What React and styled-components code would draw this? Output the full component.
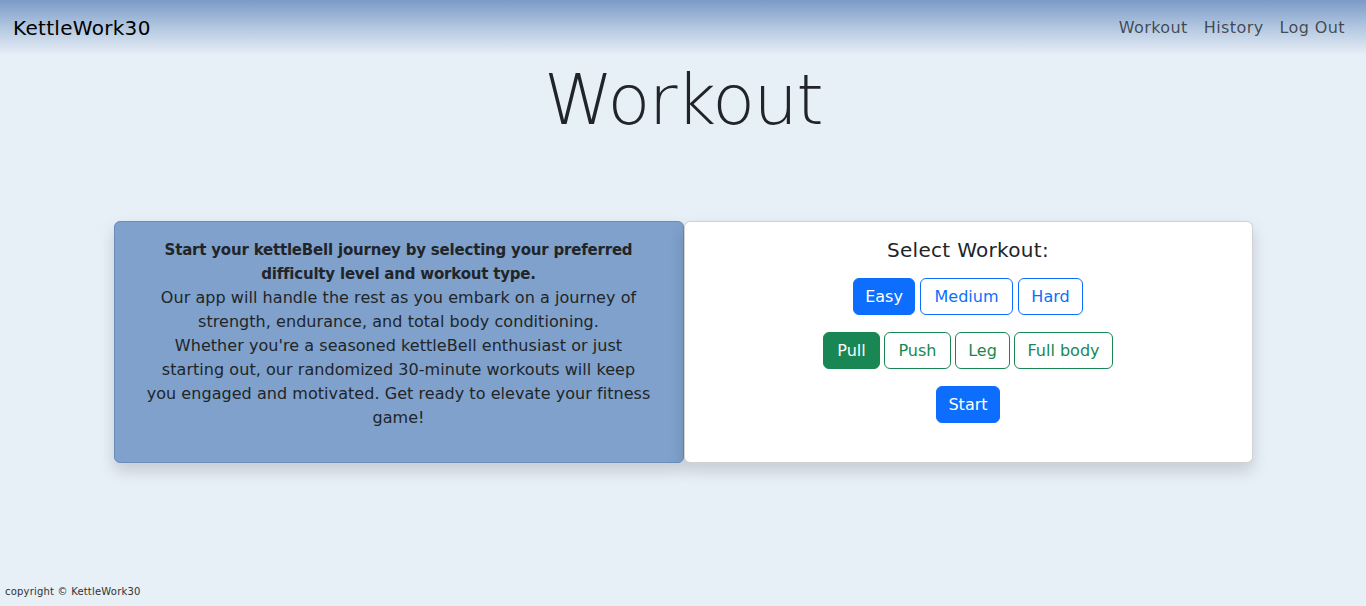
import React, { useState } from "react";
import styled, { createGlobalStyle } from "styled-components";

const FONT = `"DejaVu Sans", "Open Sans", sans-serif`;

const Global = createGlobalStyle`
  html, body { margin: 0; padding: 0; }
  body {
    background: #e7eff7;
    font-family: ${FONT};
    color: #212529;
    min-height: 606px;
  }
  * { box-sizing: border-box; }
`;

const Page = styled.div`
  min-height: 606px;
  display: flex;
  flex-direction: column;
`;

const Nav = styled.nav`
  height: 55px;
  display: flex;
  align-items: center;
  justify-content: space-between;
  padding: 0 13px;
  background: linear-gradient(180deg, #7b9bc7 0%, #b3c7e0 50%, #e7eff7 100%);
`;

const Brand = styled.a`
  font-size: 20px;
  color: #000;
  text-decoration: none;
  letter-spacing: 0.3px;
`;

const NavLinks = styled.div`
  display: flex;
`;

const NavLink = styled.a`
  font-size: 16px;
  color: rgba(0, 0, 0, 0.65);
  padding: 8px 8px;
  text-decoration: none;
  letter-spacing: 0.4px;
`;

const Title = styled.h1`
  margin: 2px 0 0;
  text-align: center;
  font-size: 70px;
  line-height: 86px;
  letter-spacing: -1.6px;
  font-weight: 200;
`;

const Cards = styled.div`
  width: 1139px;
  margin: 78px auto 0;
  display: grid;
  grid-template-columns: 570px 569px;
`;

const InfoCard = styled.div`
  background: #7fa1cb;
  border: 1px solid #6a8cb8;
  border-radius: 6px;
  box-shadow: 0 8px 16px rgba(0, 0, 0, 0.15);
  padding: 16px 10px;
  height: 242px;
  text-align: center;
  font-size: 16px;
  line-height: 24px;
  color: #212529;
  letter-spacing: 0.05px;
`;

const Bold = styled.strong`
  font-weight: 700;
  font-size: 15px;
  letter-spacing: -0.2px;
  display: block;
`;

const SelectCard = styled.div`
  background: #fff;
  border: 1px solid rgba(0, 0, 0, 0.175);
  border-radius: 6px;
  box-shadow: 0 8px 16px rgba(0, 0, 0, 0.15);
  height: 242px;
  padding: 16px;
  display: flex;
  flex-direction: column;
  align-items: center;
`;

const SelectTitle = styled.h5`
  margin: 0 0 16px;
  font-size: 20px;
  font-weight: 400;
  line-height: 24px;
  letter-spacing: 0.3px;
`;

const Group = styled.div`
  display: flex;
  gap: ${(p) => p.$gap || 5}px;
  margin-bottom: 17px;
`;

const Btn = styled.button`
  font-family: ${FONT};
  font-size: 16px;
  line-height: 23px;
  padding: 6px 0;
  border-radius: 6px;
  border: 1px solid ${(p) => p.$color};
  background: ${(p) => (p.$active ? p.$color : "#fff")};
  color: ${(p) => (p.$active ? "#fff" : p.$color)};
  cursor: pointer;
  letter-spacing: 0;
  width: ${(p) => p.$w}px;
  text-align: center;
`;

const Footer = styled.footer`
  margin-top: auto;
  padding: 0 0 9px 5px;
  font-size: 10px;
  color: #333;
  letter-spacing: 0.2px;
`;

const levels = [
  ["Easy", 62],
  ["Medium", 93],
  ["Hard", 65],
];
const types = [
  ["Pull", 57],
  ["Push", 67],
  ["Leg", 55],
  ["Full body", 99],
];

export default function App() {
  const [level, setLevel] = useState("Easy");
  const [type, setType] = useState("Pull");
  return (
    <Page>
      <Global />
      <Nav>
        <Brand href="#">KettleWork30</Brand>
        <NavLinks>
          <NavLink href="#">Workout</NavLink>
          <NavLink href="#">History</NavLink>
          <NavLink href="#">Log Out</NavLink>
        </NavLinks>
      </Nav>
      <Title>Workout</Title>
      <Cards>
        <InfoCard>
          <Bold>
            Start your kettleBell journey by selecting your preferred
            <br />
            difficulty level and workout type.
          </Bold>
          Our app will handle the rest as you embark on a journey of
          <br />
          strength, endurance, and total body conditioning.
          <br />
          Whether you're a seasoned kettleBell enthusiast or just
          <br />
          starting out, our randomized 30-minute workouts will keep
          <br />
          you engaged and motivated. Get ready to elevate your fitness
          <br />
          game!
        </InfoCard>
        <SelectCard>
          <SelectTitle>Select Workout:</SelectTitle>
          <Group $gap={5}>
            {levels.map(([l, w]) => (
              <Btn
                key={l}
                $w={w}
                $color="#0d6efd"
                $active={level === l}
                onClick={() => setLevel(l)}
              >
                {l}
              </Btn>
            ))}
          </Group>
          <Group $gap={4}>
            {types.map(([t, w]) => (
              <Btn
                key={t}
                $w={w}
                $color="#198754"
                $active={type === t}
                onClick={() => setType(t)}
              >
                {t}
              </Btn>
            ))}
          </Group>
          <Btn $w={64} $color="#0d6efd" $active>
            Start
          </Btn>
        </SelectCard>
      </Cards>
      <Footer>copyright © KettleWork30</Footer>
    </Page>
  );
}
